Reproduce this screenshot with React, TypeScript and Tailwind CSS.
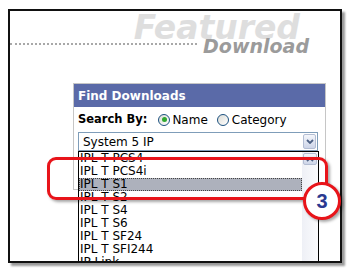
import React from "react";

const items = [
    "IPL T PCS4",
    "IPL T PCS4i",
    "IPL T S1",
    "IPL T S2",
    "IPL T S4",
    "IPL T S6",
    "IPL T SF24",
    "IPL T SFI244",
    "IP Link",
];

const Radio = ({ checked }: { checked?: boolean }) => (
    <span className="w-[12px] h-[12px] rounded-full border border-[#1c5180] bg-gradient-to-br from-[#dcdcd6] to-white flex items-center justify-center shrink-0">
        {checked && <span className="w-[5px] h-[5px] rounded-full bg-[#2fa82f]" />}
    </span>
);

const Chevron = ({ up }: { up?: boolean }) => (
    <svg width="8" height="5" viewBox="0 0 8 5">
        <path
            d={up ? "M1 4 L4 1 L7 4" : "M1 1 L4 4 L7 1"}
            fill="none"
            stroke="#4d6185"
            strokeWidth="1.8"
        />
    </svg>
);

export default function App() {
    return (
        <div className="relative w-[350px] h-[272px] bg-white overflow-hidden font-['DejaVu_Sans',sans-serif]">
            <div className="ml-[8px] mt-[9px] w-[334px] h-[254px] border-2 border-[#111] bg-white overflow-hidden shadow-[3px_3px_2px_rgba(0,0,0,0.4)]">
                {/* logo */}
                <div className="h-[72px] flex flex-col">
                    <div className="self-end pr-[40px] text-[33px] leading-[33px] font-bold italic text-[#dedede]">
                        Featured
                    </div>
                    <div className="flex items-start -mt-[7px]">
                        <div className="flex-1 mt-[6px] mr-[6px] border-t-2 border-dotted border-[#a8a8a8]" />
                        <span className="pr-[31px] text-[19px] leading-[19px] font-bold italic text-[#9b9b9b]">
                            Download
                        </span>
                    </div>
                </div>

                {/* find downloads panel */}
                <div className="ml-[63px] w-[253px] h-[107px] border border-[#c6c6c6] bg-white">
                    <div className="h-[23px] bg-[#5a6aa8] pl-[4px] flex items-center text-white text-[12px] font-bold">
                        Find Downloads
                    </div>
                    <div className="h-[25px] pl-[4px] flex items-center text-[12px] text-black">
                        <span className="text-[11.5px] font-bold mr-[11px]">Search By:</span>
                        <Radio checked />
                        <span className="ml-[2px] mr-[9px]">Name</span>
                        <Radio />
                        <span className="ml-[3px]">Category</span>
                    </div>
                    <div className="relative ml-[4px] w-[240px]">
                        <div className="h-[19px] border border-[#7f9db9] flex items-center justify-between text-[12px] text-black">
                            <span className="pl-[4px]">System 5 IP</span>
                            <span className="w-[13px] h-[15px] mr-[1px] rounded-[2px] border border-[#b3bdd3] bg-gradient-to-b from-[#f4f6fb] to-[#cdd5e8] flex items-center justify-center">
                                <Chevron />
                            </span>
                        </div>
                        {/* open dropdown list */}
                        <div className="absolute left-0 top-[19px] w-[241px] h-[130px] border border-black bg-white flex text-[12px] leading-[13px] text-black">
                            <div className="flex-1 flex flex-col">
                                {items.map((item) => (
                                    <div
                                        key={item}
                                        className={
                                            item === "IPL T S1"
                                                ? "h-[13px] pl-[1px] bg-[#adb1bc] outline-1 outline-dotted outline-[#444] -outline-offset-1"
                                                : "h-[13px] pl-[1px]"
                                        }
                                    >
                                        {item}
                                    </div>
                                ))}
                            </div>
                            <div className="w-[16px] bg-gradient-to-r from-[#eef0f6] to-[#fbfbfd] flex flex-col items-center">
                                <span className="w-[14px] h-[12px] mt-[1px] rounded-[2px] border border-[#b3bdd3] bg-gradient-to-b from-[#f4f6fb] to-[#cdd5e8] flex items-center justify-center">
                                    <Chevron up />
                                </span>
                            </div>
                        </div>
                    </div>
                </div>
            </div>

            {/* callout */}
            <div className="absolute left-[47px] top-[157px] w-[281px] h-[43px] rounded-[9px] border-[3px] border-[#e8141a] shadow-[2px_2px_3px_rgba(0,0,0,0.35)]" />
            <div className="absolute left-[303px] top-[182px] w-[38px] h-[38px] rounded-full border-[3px] border-[#e8141a] bg-white shadow-[2px_2px_3px_rgba(0,0,0,0.35)] flex items-center justify-center font-['Liberation_Sans',sans-serif] text-[20px] font-bold text-[#2b3990]">
                3
            </div>
        </div>
    );
}
